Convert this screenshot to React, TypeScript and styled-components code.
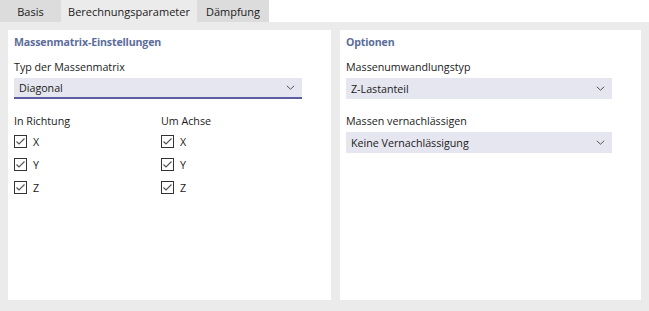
import styled, { createGlobalStyle } from 'styled-components'

const GlobalStyle = createGlobalStyle`
  html, body {
    margin: 0;
    padding: 0;
    background: #ffffff;
  }
  body {
    font-family: "Open Sans", "Noto Sans", sans-serif;
    font-size: 10.7px;
    color: #1a1a1a;
  }
`

const Window = styled.div`
  width: 649px;
  height: 311px;
  display: flex;
  flex-direction: column;
`

const TabBar = styled.div`
  display: flex;
  height: 22px;
  background: #ffffff;
`

const Tab = styled.div<{ active?: boolean; width: number }>`
  width: ${p => p.width}px;
  display: flex;
  align-items: center;
  justify-content: center;
  background: ${p => (p.active ? '#ebebeb' : '#dcdcdc')};
  color: #1a1a1a;
  font-size: 11px;
`

const Body = styled.div`
  flex: 1;
  background: #ebebeb;
  padding: 8px 8px 11px 8px;
  display: grid;
  grid-template-columns: 323px 301px;
  gap: 9px;
`

const Panel = styled.div`
  background: #ffffff;
  padding: 3px 6px 0 6px;
  display: flex;
  flex-direction: column;
`

const SectionTitle = styled.div`
  color: #5b6d9a;
  font-weight: 700;
  font-size: 10.6px;
  letter-spacing: -0.15px;
  height: 18px;
  line-height: 18px;
`

const Label = styled.div<{ top?: number }>`
  margin-top: ${p => p.top ?? 8}px;
  height: 18px;
  line-height: 18px;
`

const Select = styled.div<{ width: number; accent?: boolean }>`
  width: ${p => p.width}px;
  height: ${p => (p.accent ? 19 : 21)}px;
  margin-top: 2px;
  background: #e6e6f0;
  border-bottom: ${p => (p.accent ? '2px solid #5c5ca0' : 'none')};
  display: flex;
  align-items: center;
  justify-content: space-between;
  padding: 0 7px 0 5px;
  box-sizing: content-box;
`

const SelectBox = styled.div`
  display: flex;
`

const Columns = styled.div`
  display: grid;
  grid-template-columns: 147px 1fr;
  margin-top: 13px;
`

const Column = styled.div`
  display: flex;
  flex-direction: column;
`

const CheckRow = styled.div`
  display: flex;
  align-items: center;
  gap: 6px;
  height: 23px;
`

const Box = styled.div`
  width: 11px;
  height: 11px;
  border: 1px solid #333333;
  display: flex;
  align-items: center;
  justify-content: center;
`

const Chevron = () => (
  <svg width="9" height="5" viewBox="0 0 9 5">
    <path d="M0.8 0.8 L4.5 4.2 L8.2 0.8" fill="none" stroke="#555" strokeWidth="1" />
  </svg>
)

const Check = () => (
  <svg width="11" height="11" viewBox="0 0 11 11">
    <path d="M1.5 5.5 L4 8 L9.5 2.5" fill="none" stroke="#555" strokeWidth="1.2" />
  </svg>
)

function Checkbox({ label }: { label: string }) {
  return (
    <CheckRow>
      <Box>
        <Check />
      </Box>
      <span>{label}</span>
    </CheckRow>
  )
}

function Dropdown({ value, width, accent }: { value: string; width: number; accent?: boolean }) {
  return (
    <SelectBox>
      <Select width={width} accent={accent}>
        <span>{value}</span>
        <Chevron />
      </Select>
    </SelectBox>
  )
}

export default function App() {
  return (
    <>
      <GlobalStyle />
      <Window>
        <TabBar>
          <Tab width={61}>Basis</Tab>
          <Tab width={136} active>Berechnungsparameter</Tab>
          <Tab width={72}>Dämpfung</Tab>
        </TabBar>
        <Body>
          <Panel>
            <SectionTitle>Massenmatrix-Einstellungen</SectionTitle>
            <Label top={7}>Typ der Massenmatrix</Label>
            <Dropdown value="Diagonal" width={276} accent />
            <Columns>
              <Column>
                <Label top={0}>In Richtung</Label>
                <Checkbox label="X" />
                <Checkbox label="Y" />
                <Checkbox label="Z" />
              </Column>
              <Column>
                <Label top={0}>Um Achse</Label>
                <Checkbox label="X" />
                <Checkbox label="Y" />
                <Checkbox label="Z" />
              </Column>
            </Columns>
          </Panel>
          <Panel>
            <SectionTitle>Optionen</SectionTitle>
            <Label top={7}>Massenumwandlungstyp</Label>
            <Dropdown value="Z-Lastanteil" width={254} />
            <Label top={13}>Massen vernachlässigen</Label>
            <Dropdown value="Keine Vernachlässigung" width={254} />
          </Panel>
        </Body>
      </Window>
    </>
  )
}
